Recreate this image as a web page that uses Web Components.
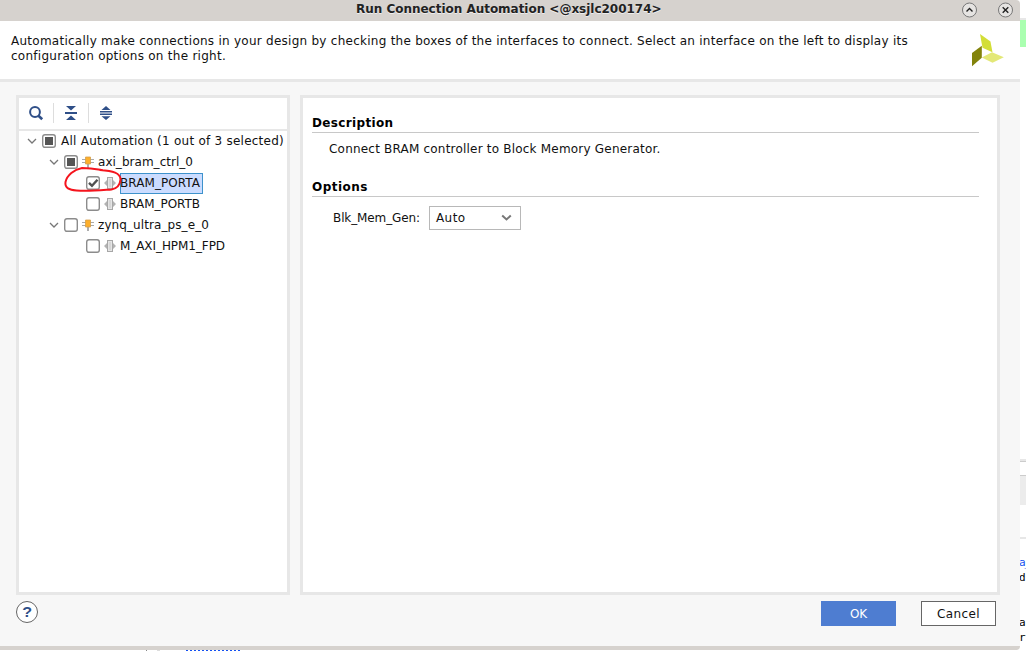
<!DOCTYPE html>
<html lang="en">
<head>
<meta charset="utf-8">
<title>Run Connection Automation</title>
<style>
html,body{margin:0;width:1026px;height:651px;overflow:hidden;background:#fff}
body{font:12px/15px "DejaVu Sans",sans-serif;color:#111}
</style>
</head>
<body>
<automation-app></automation-app>
<script>
function define(name, html, setup) {
  const t = document.createElement('template');
  t.innerHTML = html;
  customElements.define(name, class extends HTMLElement {
    constructor() { super(); this.attachShadow({mode: 'open'}).append(t.content.cloneNode(true)); }
    connectedCallback() { if (setup) setup(this, this.shadowRoot); }
  });
}

/* Text run whose tracking is set so that it spans a given width. */
define('ui-text', `<style>:host{display:block;white-space:pre;flex:none}span{display:inline-block}</style><span><slot></slot></span>`, (el, root) => {
  const want = parseFloat(el.getAttribute('w'));
  if (!want) return;
  const s = root.querySelector('span');
  s.style.letterSpacing = '0px';
  const now = s.getBoundingClientRect().width;
  s.style.letterSpacing = ((want - now) / el.textContent.length) + 'px';
  el.style.width = want + 'px';
});

define('title-bar', `<style>
:host{display:flex;box-sizing:border-box;height:21px;background:#d6d2ce;border-radius:0 4px 0 0;align-items:center;padding:0 7px 0 356px;font-weight:bold;font-size:12px;color:#222;text-shadow:0 1px #eee}
ui-text{margin-top:-2px}
i{flex:1}svg{display:block;margin-left:20px;margin-top:-2px}
</style><ui-text w="305.500">Run Connection Automation &lt;@xsjlc200174&gt;</ui-text><i></i>
<svg width="16" height="16" viewBox="0 0 16 16"><circle cx="8.500" cy="8" r="7" fill="#e6e4e2" stroke="#777"/><path d="M5.500 9.500 8.500 6.500l3 3" fill="none" stroke="#222" stroke-width="1.4"/></svg>
<svg width="16" height="16" viewBox="0 0 16 16"><circle cx="8.500" cy="8" r="7" fill="#e6e4e2" stroke="#777"/><path d="m5.700 5.200 5.600 5.600m0-5.600-5.600 5.600" fill="none" stroke="#222" stroke-width="1.4"/></svg>`);

define('dialog-header', `<style>
:host{display:flex;box-sizing:border-box;height:61px;background:#fff;border-bottom:3px solid #e7e7e7;padding:13px 16px 0 11px;justify-content:space-between}
svg{display:block}
</style><div><ui-text w="897">Automatically make connections in your design by checking the boxes of the interfaces to connect. Select an interface on the left to display its</ui-text><ui-text w="215">configuration options on the right.</ui-text></div>
<svg width="32" height="33" viewBox="0 0 32 33"><path d="M8 0 18.500 7.500 20.500 18.300 10.500 13.800z" fill="#d3de37"/><path d="M9.800 11.700v12L0 32.300V19z" fill="#82830b"/><path d="M9.800 23.500 20 18.300 31.800 23.300 20.500 28.800z" fill="#e3e877"/></svg>`);

define('ui-panel', `<style>:host{display:flex;flex-direction:column;box-sizing:border-box;border:3px solid #e7e7e7;background:#fff}</style><slot></slot>`);

define('tree-toolbar', `<style>
:host{display:flex;height:31px;border-bottom:2px solid #e7e7e7;flex:none;align-items:center}
span{display:flex;justify-content:center;width:34px;height:20px;align-items:center;margin-top:-1px}
span+span{border-left:1px solid #ddd}
svg{display:block}
</style>
<span><svg width="16" height="16" viewBox="0 0 16 16"><circle cx="7" cy="7" r="4.900" fill="none" stroke="#2f4f88" stroke-width="2"/><path d="m10.500 10.700 3.700 3.500" stroke="#2f4f88" stroke-width="2.600"/></svg></span>
<span><svg width="12" height="14" viewBox="0 0 12 14" fill="#2f4f88"><path d="M1 0h10L6 4.500zM0 6h12v2H0zM1 14h10L6 9.500z"/></svg></span>
<span><svg width="12" height="14" viewBox="0 0 12 14" fill="#2f4f88"><path d="M1.500 4h9L6 0zM0 5h12v1.500H0zM0 7.600h12v1.500H0zM1.500 10.200h9L6 14z"/></svg></span>`);

define('check-box', `<style>
:host{display:block;width:14px;height:14px;flex:none}svg{display:block}
.p,.c{display:none}:host([state=part]) .p,:host([state=on]) .c{display:inline}
</style><svg width="14" height="14" viewBox="0 0 14 14"><rect x=".7" y=".7" width="12.600" height="12.600" rx="2.200" fill="#fff" stroke="#8c8c8c" stroke-width="1.400"/><rect class="p" x="3" y="3" width="8" height="8" fill="#555"/><path class="c" d="m3 6.800 3 3 5.500-6" fill="none" stroke="#505050" stroke-width="2.400"/></svg>`);

define('tree-row', `<style>
:host{display:flex;box-sizing:border-box;height:21px;align-items:center}
:host([level="0"]){padding-left:8px}:host([level="1"]){padding-left:30px}:host([level="2"]){padding-left:67px}
svg,check-box{margin-bottom:2px}
.arrow{display:block;margin-right:5px}:host([level="2"]) .arrow{display:none}
.ip,.port{display:none;flex:none;margin-left:4px}
:host([level="1"]) .ip,:host([level="2"]) .port{display:block}
.label{display:flex;box-sizing:border-box;height:21px;align-items:center;border:1px solid transparent;margin-left:4px;padding-bottom:1px}
:host([level="1"]) .label{margin-left:3px}:host([level="2"]) .label{margin-left:4px;padding-right:1px}
:host([level="2"]) ::slotted(ui-text){margin-left:-1px;margin-right:1px}
:host([selected]) .label{background:#cbdcff;border-color:#3e92cc}
</style>
<svg class="arrow" width="10" height="8" viewBox="0 0 10 8"><path d="m1 2 4 4 4-4" fill="none" stroke="#777" stroke-width="1.300"/></svg>
<check-box></check-box>
<svg class="ip" width="12" height="12" viewBox="0 0 12 12"><path d="M0 3.500h12M0 6.500h12" stroke="#aaa"/><path d="M6 8v4" stroke="#999" stroke-width="1.600"/><path d="M3.500 1h5v7h-5z" fill="#fdaf2b" stroke="#d5a04c" stroke-width=".8"/></svg>
<svg class="port" width="12" height="12" viewBox="0 0 12 12"><path d="m0 6 3-3v6zM12 6 9 3v6z" fill="#b3b3b3"/><rect x="3.500" y=".5" width="5" height="11" fill="#e5e5e5" stroke="#a7a7a7"/><path d="M6 2v8" stroke="#c8c8c8"/></svg>
<div class="label"><slot></slot></div>`, (el, root) => {
  root.querySelector('check-box').setAttribute('state', el.getAttribute('state') || 'off');
});

define('automation-tree', `<style>:host{display:block;position:relative}
.mark{position:absolute;left:44px;top:34px}</style>
<tree-row level="0" state="part"><ui-text w="223">All Automation (1 out of 3 selected)</ui-text></tree-row>
<tree-row level="1" state="part"><ui-text w="95">axi_bram_ctrl_0</ui-text></tree-row>
<tree-row level="2" state="on" selected><ui-text w="80">BRAM_PORTA</ui-text></tree-row>
<tree-row level="2"><ui-text w="80">BRAM_PORTB</ui-text></tree-row>
<tree-row level="1"><ui-text w="111">zynq_ultra_ps_e_0</ui-text></tree-row>
<tree-row level="2"><ui-text w="105">M_AXI_HPM1_FPD</ui-text></tree-row>
<svg class="mark" width="62" height="30" viewBox="0 0 62 30"><path d="M39 5C33 4 28 3 19 3 11 4.500 4 10 2.500 17c-1 6 4 8 11 8.500 12 1 27-.5 35-1 6-1 8.500-5 9-10C57.500 8 50 6 37 5" fill="none" stroke="#f5141d" stroke-width="2" stroke-linecap="round"/></svg>`);

define('section-title', `<style>:host{display:block;box-sizing:border-box;height:18px;padding-top:1px;border-bottom:1px solid #c8c8c8;font-weight:bold;color:#000}</style><slot></slot>`);

define('select-box', `<style>:host{display:flex;box-sizing:border-box;width:92px;height:24px;border:1px solid #b8b8b8;background:#fff;align-items:center;justify-content:space-between;padding:0 8px 0 6px}svg{display:block}</style><slot></slot><svg width="11" height="8" viewBox="0 0 11 8"><path d="m1.200 1.500 4.300 4 4.300-4" fill="none" stroke="#777" stroke-width="2"/></svg>`);

define('options-view', `<style>
:host{display:block;padding:17px 18px 0 9px}
.desc{box-sizing:border-box;padding:9px 0 0 17px;height:46px}
.opt{display:flex;align-items:center;padding:9px 0 0 21px;gap:9px}
</style>
<section-title><ui-text w="81.500">Description</ui-text></section-title>
<div class="desc"><ui-text w="331.5">Connect BRAM controller to Block Memory Generator.</ui-text></div>
<section-title><ui-text w="56">Options</ui-text></section-title>
<div class="opt"><ui-text w="87">Blk_Mem_Gen:</ui-text><select-box><ui-text w="29.500">Auto</ui-text></select-box></div>`);

define('push-button', `<style>:host{display:flex;box-sizing:border-box;width:75px;height:25px;padding-top:1px;align-items:center;justify-content:center;border:1px solid #666;background:#fff}:host([primary]){background:#4e7dd1;border-color:#4e7dd1;color:#fff}</style><slot></slot>`);

define('dialog-footer', `<style>
:host{display:flex;box-sizing:border-box;height:51px;padding:6px 24px 0 16px}
.help{box-sizing:border-box;width:22px;height:22px;border:1px solid #666;border-radius:50%;background:#fff;color:#2f4f88;font:bold 14px/20px "Liberation Sans",sans-serif;text-align:center}
.help span{display:inline-block;transform:scaleX(1.15)}
i{flex:1}push-button+push-button{margin-left:25px}
</style><div class="help"><span>?</span></div><i></i><push-button primary><ui-text w="17">OK</ui-text></push-button><push-button><ui-text w="43">Cancel</ui-text></push-button>`);

/* Sliver of the window that lies to the right of the dialog. */
define('back-window', `<style>
:host{display:flex;flex-direction:column;width:6px;height:651px;overflow:hidden;background:#fff;font:11px/15px "DejaVu Sans Mono",monospace;color:#000}
div{flex:none;box-sizing:border-box;overflow:hidden;white-space:pre;text-indent:-1px;letter-spacing:-1px}
</style>
<div style="height:20px;border-bottom:2px solid #e7e7e7"></div>
<div style="height:27px;background:#aaffb0"></div>
<div style="height:415px;border-bottom:1px solid #ccc;box-shadow:inset 0 -2px #e7e7e7"></div>
<div style="height:13px"></div>
<div style="height:30px;background:#ececec;border-top:1px solid #ccc"></div>
<div style="height:34px;border-bottom:2px solid #e7e7e7"></div>
<div style="height:16px"></div>
<div style="height:15px;color:#1450f0">a_</div>
<div style="height:15px">d</div>
<div style="height:30px"></div>
<div style="height:15px">a</div>
<div style="height:15px">r</div>`);

/* Top edge of a line of text showing below the dialog. */
define('back-line', `<style>:host{display:flex;height:1px;overflow:hidden;background:#fff}
.a{width:1px;margin-left:146px;background:#888}.b{width:3px;margin-left:10px;background:#ddd}
.c{width:55px;margin-left:26px;background:repeating-linear-gradient(90deg,#1450f0 0 2px,#fff 2px 4px)}</style><span class="a"></span><span class="b"></span><span class="c"></span>`);

define('automation-app', `<style>
:host{display:flex;width:1026px;height:651px}
.dialog{width:1020px;display:flex;flex-direction:column}
.content{display:flex;height:513px;box-sizing:border-box;padding:13px 20px 0 16px;gap:10px;background:#f7f7f7}
.left{width:274px}.right{flex:1}
dialog-footer{background:#f7f7f7}
.edge{height:4px;background:#d6d2ce;border-radius:0 0 4px 0}
</style><div class="dialog">
<title-bar></title-bar><dialog-header></dialog-header>
<div class="content"><ui-panel class="left"><tree-toolbar></tree-toolbar><automation-tree></automation-tree></ui-panel><ui-panel class="right"><options-view></options-view></ui-panel></div>
<dialog-footer></dialog-footer><div class="edge"></div><back-line></back-line></div>
<back-window></back-window>`);
</script>
</body>
</html>
